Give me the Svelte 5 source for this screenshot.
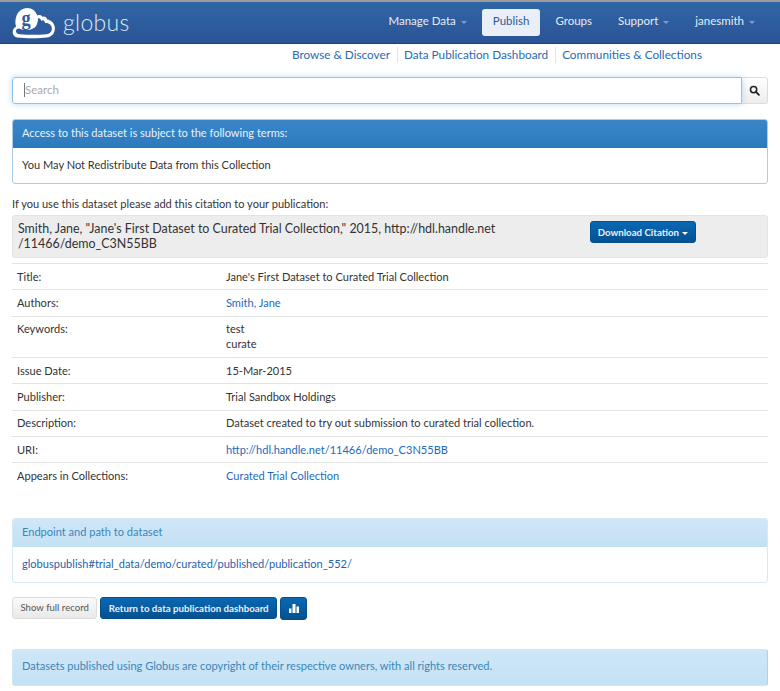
<script lang="ts">
	const navItems = [
		{ label: 'Manage Data', caret: true },
		{ label: 'Publish', active: true },
		{ label: 'Groups' },
		{ label: 'Support', caret: true },
		{ label: 'janesmith', caret: true }
	];

	const subLinks = ['Browse & Discover', 'Data Publication Dashboard', 'Communities & Collections'];

	const rows = [
		{ label: 'Title:', values: ["Jane's First Dataset to Curated Trial Collection"] },
		{ label: 'Authors:', values: ['Smith, Jane'], link: true },
		{ label: 'Keywords:', values: ['test', 'curate'] },
		{ label: 'Issue Date:', values: ['15-Mar-2015'] },
		{ label: 'Publisher:', values: ['Trial Sandbox Holdings'] },
		{ label: 'Description:', values: ['Dataset created to try out submission to curated trial collection.'] },
		{ label: 'URI:', values: ['http://hdl.handle.net/11466/demo_C3N55BB'], link: true },
		{ label: 'Appears in Collections:', values: ['Curated Trial Collection'], link: true }
	];
</script>

<div class="page">
	<header class="navbar">
		<a class="brand" href="#top">
			<svg class="logo" viewBox="0 0 48 32" width="44" height="32" preserveAspectRatio="none" aria-hidden="true">
				<path
					fill="#fff"
					d="M6 30.500C2 30 .5 27 .8 24.500 1.100 22 3 20.300 4.500 19.800 3.500 17 3.300 13.500 4.500 10 6.200 4.500 11 1 16.500 1 22 1 26 4 27.500 8.500 29.500 7.500 32 8 33.500 10 35 9 37.500 10 38.500 12.500 43 13 46.500 16.500 46.800 21 47 26 43.500 30 38 30.500 30 31.500 14 31.500 6 30.500Z"
				/>
				<path
					fill="#2f5c9e"
					d="M9 27.300C6 27.500 4.300 26 4.300 24 4.300 22.300 6 21.300 8 21.500 14 24 20 23.500 25 20.500 27.500 18 28.500 14 28.300 11.500 30 11 31.500 12 32 14 33.500 12.500 35.500 13 36 16 40 15.500 43.500 18 43.500 21.500 43.500 25 41 27 37.500 27.300 28 28 18 28 9 27.300Z"
				/>
				<text class="logo-g" x="10.500" y="17.500">g</text>
			</svg>
			<span class="brand-name">globus</span>
		</a>
		<nav class="nav-items">
			{#each navItems as item}
				<a class="nav-item" class:active={item.active} href="#top">
					{item.label}{#if item.caret}<span class="caret nav-caret"></span>{/if}
				</a>
			{/each}
		</nav>
	</header>

	<div class="sub-nav">
		{#each subLinks as link}
			<a href="#top">{link}</a>
		{/each}
	</div>

	<main class="content">
		<form class="search">
			<div class="search-input">
				<span class="cursor"></span>
				<span class="placeholder">Search</span>
			</div>
			<button class="search-btn" type="button" aria-label="Search">
				<svg viewBox="0 0 12 12" width="11" height="11" aria-hidden="true">
					<circle cx="5" cy="5" r="3.400" fill="none" stroke="#222" stroke-width="1.700" />
					<path d="M7.600 7.600 10.800 10.800" stroke="#222" stroke-width="2" stroke-linecap="round" />
				</svg>
			</button>
		</form>

		<section class="panel panel-primary">
			<h2>Access to this dataset is subject to the following terms:</h2>
			<p>You May Not Redistribute Data from this Collection</p>
		</section>

		<p class="cite-label">If you use this dataset please add this citation to your publication:</p>
		<div class="well">
			<p>
				Smith, Jane, "Jane's First Dataset to Curated Trial Collection," 2015, http://hdl.handle.net
				/11466/demo_C3N55BB
			</p>
			<button class="btn btn-blue cite-btn" type="button">
				Download Citation<span class="caret"></span>
			</button>
		</div>

		<div class="record">
			{#each rows as row}
				<div class="row">
					<div class="label">{row.label}</div>
					<div class="value">
						{#each row.values as value}
							<div>
								{#if row.link}<a href="#top">{value}</a>{:else}{value}{/if}
							</div>
						{/each}
					</div>
				</div>
			{/each}
		</div>

		<section class="panel panel-info">
			<h2>Endpoint and path to dataset</h2>
			<p><a href="#top">globuspublish#trial_data/demo/curated/published/publication_552/</a></p>
		</section>

		<div class="actions">
			<button class="btn btn-default" type="button">Show full record</button>
			<button class="btn btn-blue" type="button">Return to data publication dashboard</button>
			<button class="btn btn-blue btn-icon" type="button" aria-label="Statistics">
				<svg viewBox="0 0 10 10" width="10" height="10" aria-hidden="true">
					<path fill="#fff" d="M0 5.500h2.500V10H0zM3.500 1h3v9h-3zM7.500 3.500H10V10H7.500z" />
				</svg>
			</button>
		</div>

		<div class="alert">Datasets published using Globus are copyright of their respective owners, with all rights reserved.</div>
	</main>
</div>

<style>
	:global(body) {
		background: #fff;
	}

	.page {
		font-family: Lato, "Open Sans", sans-serif;
		font-size: 11.05px;
		line-height: 15.3px;
		color: #333;
		height: 691px;
		overflow: hidden;
	}

	a {
		color: #1b6abd;
		text-decoration: none;
	}

	.navbar {
		display: flex;
		align-items: center;
		justify-content: space-between;
		height: 41px;
		border-top: 2px solid #9b9b9b;
		border-bottom: 1px solid #1f3f70;
		background: linear-gradient(#2f66a5, #2c5496);
	}

	.brand {
		display: flex;
		align-items: center;
		gap: 7px;
		margin-left: 12px;
	}

	.logo-g {
		font-family: "Liberation Serif", serif;
		font-size: 20px;
		font-weight: 700;
		fill: #2f5c9e;
	}

	.brand-name {
		font-family: Lato, sans-serif;
		font-size: 23px;
		font-weight: 300;
		letter-spacing: 0.3px;
		color: #dfe8f3;
	}

	.nav-items {
		display: flex;
		align-items: center;
		gap: 4px;
		margin-right: 14px;
	}

	.nav-item {
		display: block;
		height: 27px;
		padding: 0 11px;
		border-radius: 3px;
		font-size: 11.5px;
		line-height: 24px;
		color: #e6edf6;
	}

	.nav-item.active {
		background: #e9eef7;
		color: #2c5c9c;
	}

	.caret {
		display: inline-block;
		width: 0;
		height: 0;
		margin-left: 5px;
		vertical-align: middle;
		border-top: 3px solid #fff;
		border-left: 3px solid transparent;
		border-right: 3px solid transparent;
	}

	.nav-caret {
		border-top-color: #7f9cc4;
	}

	.sub-nav {
		display: flex;
		justify-content: flex-end;
		height: 16px;
		margin: 3px 72px 0 0;
		font-size: 11.75px;
		line-height: 16px;
	}

	.sub-nav a {
		padding: 0 6px;
		border-left: 1px solid #e3e3e3;
		margin-left: 1px;
		color: #2a6ab0;
	}

	.sub-nav a:first-child {
		border-left: 0;
	}

	.content {
		padding: 0 12px;
	}

	.search {
		display: flex;
		margin-top: 14px;
	}

	.search-input {
		position: relative;
		flex: 1;
		height: 25px;
		border: 1px solid #8fc3ea;
		border-radius: 3px 0 0 3px;
		box-shadow: 0 0 6px rgb(102 175 233 / 45%);
		line-height: 23px;
		padding-left: 12px;
		color: #aaa;
		font-size: 11.5px;
	}

	.cursor {
		position: absolute;
		left: 11px;
		top: 5px;
		width: 1px;
		height: 14px;
		background: #777;
	}

	.search-btn {
		display: flex;
		align-items: center;
		justify-content: center;
		width: 26px;
		height: 27px;
		padding: 0;
		border: 1px solid #ddd;
		border-left: 0;
		border-radius: 0 3px 3px 0;
		background: linear-gradient(#fff, #eee);
	}

	.panel {
		border-radius: 3px;
		overflow: hidden;
	}

	.panel h2 {
		margin: 0;
		height: 29px;
		padding: 0 10px;
		font-size: 11.05px;
		font-weight: 400;
		line-height: 28px;
	}

	.panel p {
		margin: 0;
		height: 35px;
		padding: 0 9px;
		line-height: 33px;
	}

	.panel-primary {
		margin-top: 15px;
		border: 1px solid #a9cdea;
	}

	.panel-primary h2 {
		margin: -1px -1px 0;
		background: linear-gradient(#3a86c8, #2c7abd);
		color: #e8f2fa;
	}

	.panel-info {
		margin-top: 28px;
		border: 1px solid #d5e9f7;
	}

	.panel-info h2 {
		margin: -1px -1px 0;
		background: linear-gradient(#cfe7f7, #c4e1f5);
		color: #3a87b8;
	}

	.panel-info p a {
		color: #1d63ad;
	}

	.cite-label {
		margin: 12px 0 0;
		height: 19px;
	}

	.well {
		display: flex;
		justify-content: space-between;
		height: 43px;
		box-sizing: border-box;
		padding: 5px 71px 0 5px;
		border: 1px solid #e3e3e3;
		border-radius: 3px;
		background: #ededed;
	}

	.well p {
		width: 490px;
		margin: 0;
		font-size: 12.45px;
		line-height: 15px;
	}

	.btn {
		height: 22px;
		padding: 0 7.5px 1px;
		border-radius: 3px;
		font-family: inherit;
		font-size: 9.7px;
		font-weight: 700;
		line-height: 20px;
	}

	.btn-blue {
		border: 1px solid #04508f;
		background: linear-gradient(#0a68b4, #04518f);
		color: #e9f1f8;
	}

	.cite-btn {
		flex: none;
		padding: 0 7px 1px;
	}

	.cite-btn .caret {
		margin-left: 3px;
	}

	.record {
		margin-top: 5px;
		border-top: 1px solid #e3e3e3;
	}

	.row {
		display: flex;
		padding: 4.5px 5px 5.5px;
		border-bottom: 1px solid #e3e3e3;
	}

	.row:last-child {
		border-bottom-color: transparent;
	}

	.label {
		flex: none;
		width: 209px;
	}

	.actions {
		display: flex;
		align-items: center;
		gap: 3px;
		margin-top: 14px;
	}

	.btn-default {
		border: 1px solid #ddd;
		background: linear-gradient(#fafafa, #e9e9e9);
		font-size: 9.6px;
		font-weight: 400;
		color: #555;
	}

	.btn-icon {
		display: flex;
		align-items: center;
		justify-content: center;
		width: 27px;
		height: 23px;
		padding: 0;
	}

	.alert {
		height: 37px;
		box-sizing: border-box;
		margin-top: 29px;
		padding: 0 9px;
		border: 1px solid #d0e7f6;
		border-right-color: #a9d3ef;
		border-radius: 3px;
		background: linear-gradient(#cfe7f7, #c4e1f5);
		line-height: 32px;
		color: #3a87b8;
	}
</style>
